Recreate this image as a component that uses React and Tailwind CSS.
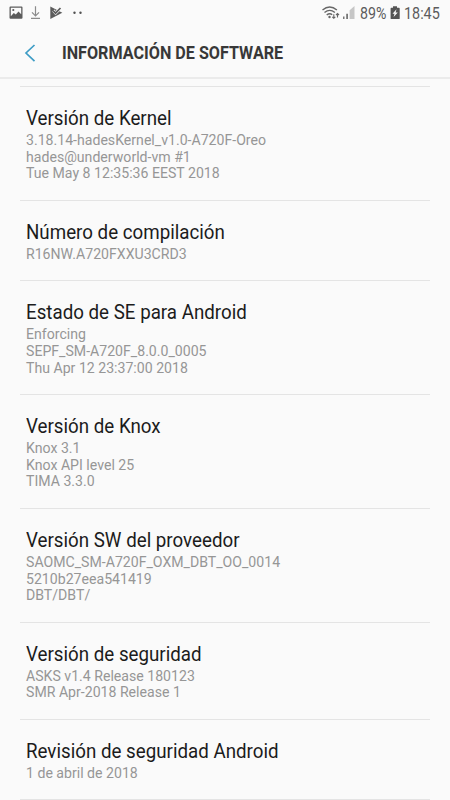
const sections = [
  { title: "Versión de Kernel", lines: ["3.18.14-hadesKernel_v1.0-A720F-Oreo", "hades@underworld-vm #1", "Tue May 8 12:35:36 EEST 2018"] },
  { title: "Número de compilación", lines: ["R16NW.A720FXXU3CRD3"] },
  { title: "Estado de SE para Android", lines: ["Enforcing", "SEPF_SM-A720F_8.0.0_0005", "Thu Apr 12 23:37:00 2018"] },
  { title: "Versión de Knox", lines: ["Knox 3.1", "Knox API level 25", "TIMA 3.3.0"] },
  { title: "Versión SW del proveedor", lines: ["SAOMC_SM-A720F_OXM_DBT_OO_0014", "5210b27eea541419", "DBT/DBT/"] },
  { title: "Versión de seguridad", lines: ["ASKS v1.4 Release 180123", "SMR Apr-2018 Release 1"] },
  { title: "Revisión de seguridad Android", lines: ["1 de abril de 2018"] },
];

function StatusLeft() {
  return (
    <svg width="100" height="28" viewBox="0 0 100 28" className="shrink-0">
      <path fillRule="evenodd" fill="#5c5c5c" d="M10.500 6.500h11a1 1 0 0 1 1 1v10.300a1 1 0 0 1-1 1h-11a1 1 0 0 1-1-1V7.500a1 1 0 0 1 1-1zM10.800 7.800v8.400l3-3.200 2 1.600 2.700-3.200 2.700 2.800V7.800z" />
      <circle cx="13.300" cy="10" r="1.100" fill="#5c5c5c" />
      <path fill="none" stroke="#8b8b8b" strokeWidth="1.200" d="M35.500 6.300v9.500M32 12.300l3.500 3.500 3.500-3.500M31 18.300h9" />
      <path fill="#5c5c5c" d="M50.300 6.500l12 6.200-12 6.200z" />
      <path fill="none" stroke="#fafafa" strokeWidth="2.800" d="M53.300 10.500l2.300 2.600 5.500-5.500" />
      <path fill="none" stroke="#5c5c5c" strokeWidth="1.700" d="M53 10.500l2.500 2.700 5-5.200" />
      <circle cx="74.500" cy="12.700" r="1.200" fill="#505050" />
      <circle cx="80.500" cy="12.700" r="1.200" fill="#505050" />
    </svg>
  );
}

function Signal() {
  return (
    <svg width="37" height="28" viewBox="320 0 37 28" className="shrink-0">
      <g fill="none" stroke="#666" strokeWidth="1.400">
        <path d="M322.500 10q7.200-6 14.400 0M324.500 12.500q5.200-4.200 10.400 0M326.700 15q3-2.400 5.500-.3" />
      </g>
      <circle cx="329.500" cy="17" r="1.200" fill="#666" />
      <path fill="none" stroke="#666" strokeWidth="1.100" d="M333.800 14.300v4M332.300 16.800l1.500 1.500 1.500-1.500M337.500 17.500v-4M336 15l1.500-1.500 1.500 1.500" />
      <path fill="#777" d="M343 16.500h1.500V19H343zM346.200 13.700h1.800V19h-1.800z" />
      <path fill="#c6c6c6" d="M349.600 10.300l4.900-4.300v13h-4.900z" />
    </svg>
  );
}

function Battery() {
  return (
    <svg width="10" height="28" viewBox="390 0 10 28" className="shrink-0">
      <path fill="#555" d="M393 6.200h4v1.500h2q.7 0 .7.700v10q0 .7-.7.700h-7.700q-.7 0-.7-.700v-10q0-.7.700-.7h1.700z" />
      <path fill="#fafafa" d="M396.500 9.200l-4 4.600h2l-.9 3.200 4.200-4.600h-2.200z" />
    </svg>
  );
}

export default function App() {
  return (
    <div className="flex h-[800px] w-[450px] flex-col overflow-hidden bg-[#fafafa] font-['Roboto',sans-serif]">
      <div className="flex h-7 shrink-0 text-[#5c5c5c]">
        <StatusLeft />
        <div className="w-[220px]" />
        <Signal />
        <div className="ml-[3px] w-[30px] whitespace-nowrap text-[16.500px] leading-[28px]">
          <span className="inline-block origin-left scale-x-[0.86]">89%</span>
        </div>
        <Battery />
        <div className="ml-[4px] whitespace-nowrap text-[16.500px] leading-[28px]">
          <span className="inline-block origin-left scale-x-[0.87]">18:45</span>
        </div>
      </div>
      <header className="flex h-[51px] shrink-0 items-center border-b-2 border-[#ebebeb]">
        <svg width="12" height="20" viewBox="0 0 12 20" className="ml-[24px]">
          <path d="M10.500 2L2 10l8.500 8.200" fill="none" stroke="#3d9cc5" strokeWidth="1.700" />
        </svg>
        <h1 className="ml-[25.500px] mt-px origin-left scale-x-[0.85] whitespace-nowrap text-[19px] font-bold leading-6 text-[#383838]">
          INFORMACIÓN DE SOFTWARE
        </h1>
      </header>
      <main className="mx-5 mt-[7px] shrink-0 border-b border-[#e4e4e4]">
        {sections.map((s) => (
          <section key={s.title} className="border-t border-[#e4e4e4] px-[6px] pb-[17.800px] pt-[20px]">
            <h2 className="origin-left scale-x-[0.961] whitespace-nowrap text-[19.500px] leading-6 text-[#1c1c1c]">{s.title}</h2>
            <div className="mt-px whitespace-nowrap text-[14.120px] leading-[16.670px] text-[#969696]">
              {s.lines.map((l) => (
                <p key={l}>{l}</p>
              ))}
            </div>
          </section>
        ))}
      </main>
    </div>
  );
}
